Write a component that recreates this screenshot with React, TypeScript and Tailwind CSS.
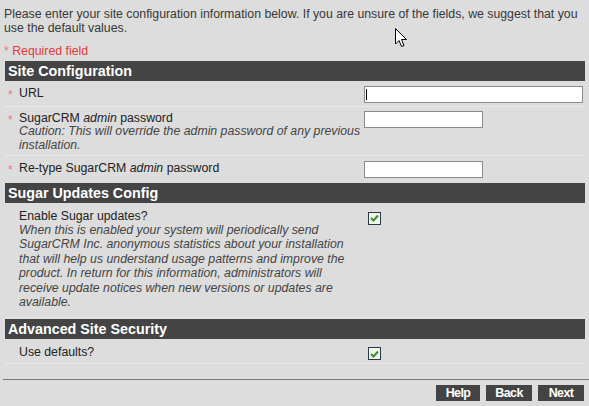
import React from "react";

const Star = () => (
  <span className="text-[#ec7a7a] text-[12px] leading-[14px]">*</span>
);

const Check = () => (
  <div className="w-[13px] h-[13px] border border-[#2b3a44] bg-[#eef6ea] flex items-center justify-center">
    <svg width="9" height="8" viewBox="0 0 9 8">
      <path d="M1 4 L3.5 6.5 L8 1.5" fill="none" stroke="#3f8a3a" strokeWidth="2" />
    </svg>
  </div>
);

const Header = ({ children }: { children: React.ReactNode }) => (
  <div className="h-[20px] bg-[#444444] text-white font-bold text-[14.3px] leading-[20px] pl-[3px]">
    {children}
  </div>
);

const Box = ({ w, caret }: { w: string; caret?: boolean }) => (
  <div className={`${w} h-[17px] bg-white border border-[#8a8a8a] relative`}>
    {caret && <div className="absolute left-[1px] top-[2px] w-[1px] h-[11px] bg-black" />}
  </div>
);

export default function App() {
  return (
    <div className="w-[589px] h-[406px] bg-[#dddddd] relative overflow-hidden font-['Liberation_Sans',Arial,sans-serif] text-[12.3px] text-[#383838]">
      <p className="pl-[4px] pt-[7px] leading-[14px] w-[584px]">
        Please enter your site configuration information below. If you are unsure of the fields, we suggest that you use the default values.
      </p>
      <div className="pl-[4px] mt-[9px] leading-[14px] text-[#e23a3a]">
        <span className="text-[#ec7a7a]">*</span> Required field
      </div>
      <div className="ml-[5px] mr-[4px] mt-[3px]">
        <Header>Site Configuration</Header>
        {/* URL */}
        <div className="flex border-b border-[#e9e9e9]">
          <div className="w-[359px] flex pt-[5px] pb-[2px]">
            <div className="w-[14px] pl-[3px]"><Star /></div>
            <div className="leading-[14px] text-[#222]">URL</div>
          </div>
          <div className="pt-[5px] pb-[3px]">
            <Box w="w-[219px]" caret />
          </div>
        </div>
        {/* admin password */}
        <div className="flex border-b border-[#e9e9e9]">
          <div className="w-[359px] flex pt-[4px] pb-[3px]">
            <div className="w-[14px] pl-[3px] shrink-0"><Star /></div>
            <div className="leading-[14px]">
              <div className="text-[#222]">SugarCRM <i>admin</i> password</div>
              <div className="italic text-[#444] leading-[13.5px] w-[344px]">
                Caution: This will override the admin password of any previous installation.
              </div>
            </div>
          </div>
          <div className="pt-[4px] pb-[3px]">
            <Box w="w-[119px]" />
          </div>
        </div>
        {/* retype */}
        <div className="flex">
          <div className="w-[359px] flex pt-[5px] pb-[3px]">
            <div className="w-[14px] pl-[3px]"><Star /></div>
            <div className="leading-[14px] text-[#222]">Re-type SugarCRM <i>admin</i> password</div>
          </div>
          <div className="pt-[5px] pb-[4px]">
            <Box w="w-[119px]" />
          </div>
        </div>
        <Header>Sugar Updates Config</Header>
        <div className="flex border-b border-[#e9e9e9]">
          <div className="w-[359px] pl-[14px] pt-[6px] pb-[8px]">
            <div className="leading-[14px] text-[#222]">Enable Sugar updates?</div>
            <div className="italic text-[#444] leading-[14.4px] w-[340px]">
              When this is enabled your system will periodically send SugarCRM Inc. anonymous statistics about your installation that will help us understand usage patterns and improve the product. In return for this information, administrators will receive update notices when new versions or updates are available.
            </div>
          </div>
          <div className="pt-[9px] pl-[4px]">
            <Check />
          </div>
        </div>
        <div className="mt-[1px]">
          <Header>Advanced Site Security</Header>
        </div>
        <div className="flex border-b border-[#e9e9e9]">
          <div className="w-[359px] pl-[14px] pt-[6px] pb-[4px]">
            <div className="leading-[14px] text-[#222]">Use defaults?</div>
          </div>
          <div className="pt-[8px] pl-[4px]">
            <Check />
          </div>
        </div>
      </div>
      <div className="ml-[3px] mt-[15px] border-t border-[#7a7a7a]" />
      <div className="flex justify-end gap-[6px] pr-[5px] mt-[5px]">
        <div className="w-[44px] h-[16px] bg-[#444444] text-white font-bold text-[12.5px] leading-[16px] text-center tracking-[-0.6px]">Help</div>
        <div className="w-[46px] h-[16px] bg-[#444444] text-white font-bold text-[12.5px] leading-[16px] text-center tracking-[-0.6px]">Back</div>
        <div className="w-[46px] h-[16px] bg-[#444444] text-white font-bold text-[12.5px] leading-[16px] text-center tracking-[-0.6px]">Next</div>
      </div>
      <svg className="absolute left-[395px] top-[28px]" width="13" height="20" viewBox="0 0 13 20">
        <path d="M0.5 0.5 L0.5 16 L4 12.5 L6.5 18.5 L9 17.5 L6.5 11.5 L11.5 11.5 Z" fill="white" stroke="black" strokeWidth="1" strokeLinejoin="miter" />
      </svg>
    </div>
  );
}
